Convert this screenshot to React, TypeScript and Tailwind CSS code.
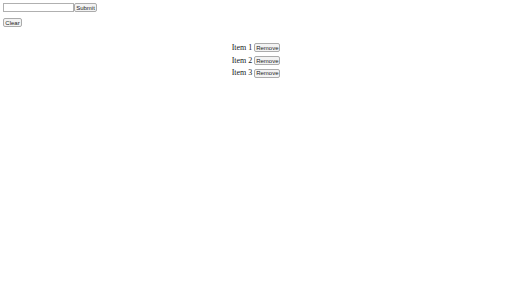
import React from "react";

const btn =
  "h-[9px] px-[2px] border border-[#ababab] rounded-[2px] bg-[#f3f3f3] text-[6px] leading-none text-[#222] font-['Liberation_Sans',Arial,sans-serif] flex items-center justify-center";

export default function App() {
  return (
    <div className="w-[512px] h-[288px] bg-white pl-[3px] pt-[3px] font-['Liberation_Serif','Times_New_Roman',serif] text-[#222]">
      <div className="flex items-center">
        <div className="w-[71px] h-[9px] border border-[#b0b0b0] bg-white" />
        <button className={btn + " w-[23px]"}>Submit</button>
      </div>
      <div className="mt-[6px]">
        <button className={btn + " w-[19px]"}>Clear</button>
      </div>
      <div className="mt-[14.5px] flex flex-col items-center pr-[3px]">
        {["Item 1", "Item 2", "Item 3"].map((t) => (
          <div key={t} className="flex items-center h-[12.7px] text-[8px] leading-none">
            <span className="mr-[2px]">{t}</span>
            <button className={btn + " w-[26px]"}>Remove</button>
          </div>
        ))}
      </div>
    </div>
  );
}
